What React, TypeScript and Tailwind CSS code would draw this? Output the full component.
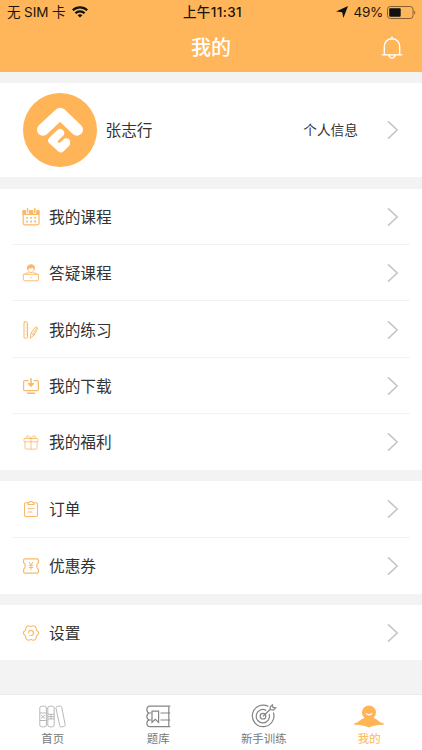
import type { ReactNode } from 'react'

type RowProps = {
  icon: ReactNode
  label: string
}

function Chevron() {
  return (
    <svg width="12" height="20" viewBox="0 0 12 20" fill="none" stroke="#c6c6c6" strokeWidth="1.6" aria-hidden="true">
      <path d="M1 1.3 10.200 10 1 18.700" />
    </svg>
  )
}

function LineIcon({ children, width = 1 }: { children: ReactNode; width?: number }) {
  return (
    <svg
      width="18"
      height="18"
      viewBox="0 0 18 18"
      fill="none"
      stroke="#f9b968"
      strokeWidth={width}
      strokeLinecap="round"
      strokeLinejoin="round"
      className="shrink-0"
      aria-hidden="true"
    >
      {children}
    </svg>
  )
}

function CalendarIcon() {
  return (
    <LineIcon>
      <rect x="1.200" y="2.500" width="15.800" height="14.300" rx="1.500" strokeWidth="1.200" />
      <path d="M1.200 2.500H17v4H1.200z" fill="#f9b968" />
      <path d="M5.500 1v3.500M12.700 1v3.500" stroke="#fff" strokeWidth="3" />
      <path d="M5.500 .8v3.400M12.700 .8v3.400" strokeWidth="1.500" />
      <path d="M9 9.800h.3M13 9.800h.3M5 13.500h.3M9 13.500h.3M5 9.800h.3M13 13.500h.3" strokeWidth="1.800" />
    </LineIcon>
  )
}

function TeacherIcon() {
  return (
    <LineIcon width={0.9}>
      <path d="M5.600 5.200C5 2 6.500 .8 9 .8s4 1.200 3.400 4.400c-.8-.2-1.200-1-1.600-1.700-1.500.7-3.400.8-4.200.6-.3.300-.5.700-1 1.100z" fill="#f9b968" />
      <path d="M6 5c.1 2.300 1.300 3.600 3 3.600S11.900 7.300 12 5" />
      <path d="M2 10.500c.5-1 2-1.300 4.500-1.700M16 10.500c-.5-1-2-1.300-4.500-1.700" />
      <path d="M1.500 10.300h15v5.200c0 .9-.4 1.300-1.300 1.300H2.800c-.9 0-1.300-.4-1.300-1.300z" fill="#fff" />
      <path d="M9 13.500v.2" strokeWidth="1.300" />
    </LineIcon>
  )
}

function RulerIcon() {
  return (
    <LineIcon>
      <rect x="2" y="1" width="3.600" height="16" rx=".8" />
      <path d="M4 4h1.500M4 7h1.500M4 10h1.500M4 13h1.500" strokeWidth=".8" />
      <path d="m9.200 12 4.100-5.800c.7-1 2.900.3 2.300 1.500L12.100 14l-3.500 3z" />
      <path d="m10.700 13.200 3.800-6M9.200 12l2.900 2" strokeWidth=".8" />
    </LineIcon>
  )
}

function DownloadIcon() {
  return (
    <LineIcon width={1.2}>
      <path d="M6 3.700H2.800c-.7 0-1.200.5-1.200 1.200v7.600c0 .7.500 1.200 1.200 1.200h12.400c.7 0 1.200-.5 1.200-1.200V4.900c0-.7-.5-1.200-1.200-1.200H12" />
      <path d="M9 1.800v6M5.500 16.200h7" strokeWidth="1.500" />
      <path d="M6.500 6.500h5L9 9.300z" fill="#f9b968" />
    </LineIcon>
  )
}

function GiftIcon() {
  return (
    <LineIcon width={0.8}>
      <rect x="2" y="5.500" width="14" height="3.300" rx=".6" />
      <path d="M3 8.800v6.500c0 .5.300.8.800.8h10.400c.5 0 .8-.3.800-.8V8.800M9 5.500v10.600" />
      <path d="M9 5.500C7.500 5.500 4 5.300 4.300 3.600 4.700 1.800 8.300 3 9 5.500zM9 5.500c1.500 0 5-.2 4.700-1.900C13.300 1.800 9.700 3 9 5.500z" />
    </LineIcon>
  )
}

function OrderIcon() {
  return (
    <LineIcon width={1.1}>
      <path d="M6 2.700H3.700c-.7 0-1.200.5-1.200 1.200v11.400c0 .7.500 1.200 1.200 1.200h10.600c.7 0 1.200-.5 1.200-1.200V3.900c0-.7-.5-1.200-1.200-1.200H12" />
      <path d="M6 4.500V2.800c1.500 0 1.700-1.500 3-1.500s1.500 1.500 3 1.500v1.700zM6 8.800h6M6 12h4" />
    </LineIcon>
  )
}

function CouponIcon() {
  return (
    <LineIcon width={1.2}>
      <path d="M3 1.800h12c.9 0 1.400.5 1.400 1.400v2.600c-2.200 1-2.200 5.400 0 6.400v2.600c0 .9-.5 1.400-1.400 1.400H3c-.9 0-1.400-.5-1.400-1.400v-2.600c2.200-1 2.200-5.400 0-6.400V3.200c0-.9.500-1.400 1.400-1.400z" />
      <path d="m7.200 5.200 1.800 2.700 1.800-2.700M9 7.900v5M7.200 8.300h3.600M7.200 10.500h3.600" strokeWidth="1" />
    </LineIcon>
  )
}

function SettingsIcon() {
  return (
    <LineIcon width={1.1}>
      <path d="M6.400 1.800c.9 0 1.300.7 2.600.7s1.700-.7 2.600-.7c.8 0 2.100 1.100 2.500 1.900.3.800-.1 1.500.5 2.500s2 1 2 2.800-1.400 1.800-2 2.800-.2 1.700-.5 2.500c-.4.800-1.700 1.900-2.500 1.900-.9 0-1.300-.7-2.600-.7s-1.700.7-2.600.7c-.8 0-2.100-1.100-2.500-1.900-.3-.8.1-1.500-.5-2.500s-2-1-2-2.800 1.400-1.800 2-2.800.2-1.700.5-2.500c.4-.8 1.700-1.900 2.500-1.900z" />
      <path d="M6.500 8.700c.3-1.600 1.300-2.300 2.500-2.300 1.500 0 2.500 1.100 2.500 2.500S10.400 11.500 9 11.500" />
      <path d="M7.200 11.200v.1" />
    </LineIcon>
  )
}

function HomeTabIcon() {
  return (
    <svg width="27" height="23" viewBox="0 0 27 23" fill="none" stroke="#b0b0b0" strokeWidth=".9" aria-hidden="true">
      <rect x=".8" y="1.200" width="6.600" height="20.600" rx="1.800" />
      <rect x="8.800" y="1.200" width="6.400" height="20.600" rx="1.800" />
      <path d="m18.300 1.400 2.700-.4c1.100-.1 1.600.5 1.800 1.400l3.300 17c.2 1.300-.3 1.900-1.300 2.100l-2.100.4c-1.200.2-1.800-.5-2-1.500L17 3.300c-.2-1.100.3-1.700 1.300-1.900z" />
      <path d="M.8 8h6.600M.8 15.500h6.600M2 10l4 3.500M6 10l-4 3.500M8.800 9.300h6.400M8.800 14h6.400M8.800 11.700h6.400M12 9v5" />
    </svg>
  )
}

function BookTabIcon() {
  return (
    <svg width="25" height="23" viewBox="0 0 25 23" fill="none" stroke="#858585" strokeWidth="1.200" aria-hidden="true">
      <path d="M24.300 1.200H4C1.600 1.200.9 2.600.9 4.500S1.700 7.800 3.600 8C1.700 8.300.9 9.700.9 11.500s.8 3.200 2.700 3.400C1.700 15.200.9 16.500.9 18.300c0 2.200 1 3.400 3.100 3.400h20.300" />
      <path d="M3.600 8h2M3.600 15h2M14.500 8h9.700M14.500 15h9.700M22.800 1.500v6.300M22.800 8.200v6.600M22.800 15.200v6.300" />
      <path d="M6 6.200h6.600v11.200l-3.300-3.100L6 17.400z" />
    </svg>
  )
}

function TargetTabIcon() {
  return (
    <svg width="26" height="24" viewBox="0 0 26 24" fill="none" stroke="#858585" strokeWidth="1.200" aria-hidden="true">
      <path d="M17.300 2.400A10.800 10.800 0 1 0 22.400 8.500" />
      <path d="M15.200 6.400A6.700 6.700 0 1 0 18.200 10" />
      <circle cx="12" cy="12.200" r="2.800" />
      <path d="M12 12.200 19.200 5.500M19.200 5.500V3L21.400.9 22 3.400l2.700.5-2.300 2.200z" />
    </svg>
  )
}

function MineTabIcon() {
  return (
    <svg width="30" height="23" viewBox="0 0 30 23" fill="#ffb457" aria-hidden="true">
      <path d="M.3 18.200C4.500 18 5.500 14.500 11 12.700h8c5.500 1.800 6.500 5.300 10.700 5.500v1.600C25 19.500 20 20.300 15 22.500 10 20.300 5 19.500.3 19.800z" />
      <circle cx="15" cy="7.500" r="7" />
      <path d="M12.200 8.600c1.600 1.700 4 1.700 5.600 0" fill="none" stroke="#fff" strokeWidth="1.300" strokeLinecap="round" />
    </svg>
  )
}

function StatusBar() {
  return (
    <div className="grid h-6 grid-cols-3 items-center font-['Inter','Noto_Sans_CJK_SC',sans-serif] text-[13.500px] leading-none text-[#1c1509]">
      <div className="flex items-center gap-[7px] pl-[7px]">
        <span className="whitespace-nowrap pt-[2px] tracking-[-0.1px]">无 SIM 卡</span>
        <svg width="16" height="12" viewBox="0 0 16 12" fill="none" stroke="#111" strokeWidth="2.200" aria-hidden="true">
          <path d="M.8 4.300c4-4 10.400-4 14.400 0M3.400 7.200c2.600-2.500 6.600-2.500 9.200 0" />
          <path d="M8 11.500 5.600 9.200c1.400-1.200 3.400-1.200 4.800 0z" fill="#111" stroke="none" />
        </svg>
      </div>
      <div className="whitespace-nowrap pl-[3px] pt-[2px] text-center font-medium tracking-[0.4px]">上午11:31</div>
      <div className="flex items-center justify-end pr-[6px]">
        <svg width="12" height="12" viewBox="0 0 12 12" fill="#111" aria-hidden="true">
          <path d="M12 0 7.400 12 6.200 6.200 0 5.600z" />
        </svg>
        <span className="ml-[6px] pt-[2px] tracking-[-0.3px]">49%</span>
        <svg width="29" height="13" viewBox="0 0 29 13" className="ml-[4px]" aria-hidden="true">
          <rect x=".5" y=".5" width="25.500" height="12" rx="2.800" fill="none" stroke="#86602f" />
          <rect x="2.200" y="2.200" width="11.500" height="8.600" rx="1" fill="#111" />
          <path d="M27.200 4.500c1.500.5 1.500 3.500 0 4z" fill="#86602f" />
        </svg>
      </div>
    </div>
  )
}

function Header() {
  return (
    <header className="h-[72px] bg-[#ffb65a]">
      <StatusBar />
      <div className="grid h-12 grid-cols-3 items-center pb-[1px]">
        <h1 className="col-start-2 text-center text-[20px] font-medium leading-none text-white">我的</h1>
        <svg
          width="22"
          height="24"
          viewBox="0 0 22 24"
          fill="none"
          stroke="#fff"
          strokeWidth="1.400"
          className="mr-[19px] justify-self-end"
          aria-label="通知"
        >
          <path d="M3.300 18.600V10.500c0-4.600 3.200-7.700 7.700-7.700s7.700 3.100 7.700 7.700v8.100M.6 18.900h20.800M11 .6v2.200M8 19.300c.2 3.700 5.800 3.700 6 0" />
        </svg>
      </div>
    </header>
  )
}

function Profile() {
  return (
    <section className="mt-[11px] flex h-[94px] items-center bg-white pl-[23px] pr-[23px]">
      <svg width="74" height="74" viewBox="0 0 74 74" fill="none" aria-hidden="true">
        <circle cx="37" cy="37" r="37" fill="#ffb457" />
        <g stroke="#fff" strokeLinecap="round" strokeLinejoin="round">
          <path d="M20 36.700 37.200 20.700 54 36.700" strokeWidth="12" />
          <path d="M37.200 40 29.200 47.500 37.800 55.300 43 50.300" strokeWidth="8" />
          <path d="M37 50.500l4.500-.5" strokeWidth="5" />
          <circle cx="43.300" cy="49" r="3.800" fill="#fff" stroke="none" />
        </g>
        <path d="M35.300 48.600c3.800 1.200 2-2.800 4.700-3.800" stroke="#ffb457" strokeWidth="1.700" strokeLinecap="round" />
      </svg>
      <span className="ml-[8.500px] pt-[2px] text-[15.700px] text-[#333]">张志行</span>
      <span className="ml-auto mr-[29px] pt-[2px] text-[13.700px] text-[#333]">个人信息</span>
      <Chevron />
    </section>
  )
}

function Row({ icon, label }: RowProps) {
  return (
    <li className="mx-3 flex flex-1 items-center border-b border-[#f3f3f3] pl-[10px] pr-[11px] pt-px last:border-transparent">
      {icon}
      <span className="ml-[9px] pt-[2px] text-[15.700px] leading-none text-[#333]">{label}</span>
      <span className="ml-auto">
        <Chevron />
      </span>
    </li>
  )
}

function Tab({ icon, label, active = false }: RowProps & { active?: boolean }) {
  return (
    <div className="flex flex-col items-center pt-[9px]">
      <div className="flex h-6 items-center">{icon}</div>
      <span className={active ? 'mt-[5px] text-[11.400px] leading-[13px] text-[#ffb457]' : 'mt-[5px] text-[11.400px] leading-[13px] text-[#777]'}>
        {label}
      </span>
    </div>
  )
}

export default function App() {
  return (
    <main className="flex h-[750px] w-full flex-col overflow-hidden bg-[#f3f3f3] font-['Liberation_Sans','Noto_Sans_CJK_SC',sans-serif]">
      <Header />
      <Profile />
      <ul className="mt-3 flex h-[281px] flex-col bg-white">
        <Row icon={<CalendarIcon />} label="我的课程" />
        <Row icon={<TeacherIcon />} label="答疑课程" />
        <Row icon={<RulerIcon />} label="我的练习" />
        <Row icon={<DownloadIcon />} label="我的下载" />
        <Row icon={<GiftIcon />} label="我的福利" />
      </ul>
      <ul className="mt-[11px] flex h-[113px] flex-col bg-white">
        <Row icon={<OrderIcon />} label="订单" />
        <Row icon={<CouponIcon />} label="优惠券" />
      </ul>
      <ul className="mt-[11px] flex h-[55px] flex-col bg-white">
        <Row icon={<SettingsIcon />} label="设置" />
      </ul>
      <nav className="mt-auto grid h-[56px] grid-cols-4 border-t border-[#ececec] bg-white">
        <Tab icon={<HomeTabIcon />} label="首页" />
        <Tab icon={<BookTabIcon />} label="题库" />
        <Tab icon={<TargetTabIcon />} label="新手训练" />
        <Tab icon={<MineTabIcon />} label="我的" active />
      </nav>
    </main>
  )
}
